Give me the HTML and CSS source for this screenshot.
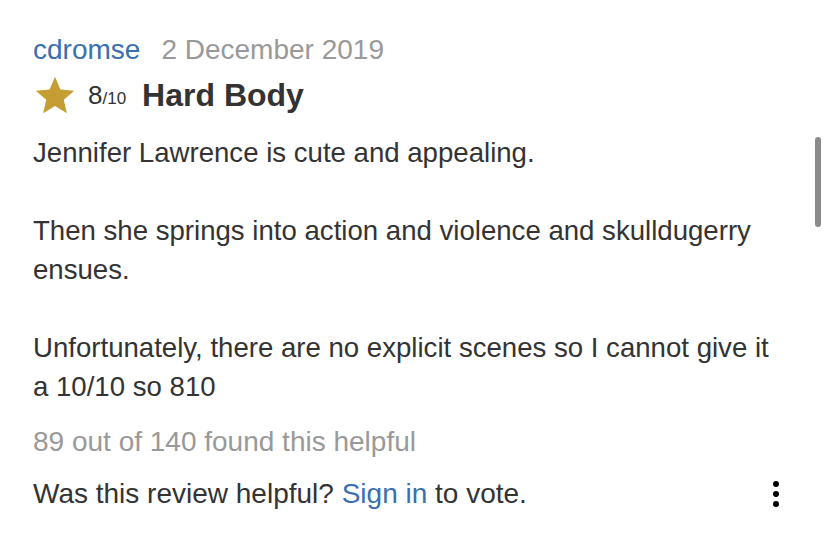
FILE: index.html
```html
<!DOCTYPE html>
<html lang="en">
<head>
<meta name="viewport" content="width=device-width, initial-scale=1.0">
<link rel="stylesheet" href="styles.css">
<title>User review</title>
</head>
<body>
  <div class="review">
    <div class="review-meta">
      <a class="author" href="#">cdromse</a>
      <span class="date">2 December 2019</span>
    </div>
    <div class="review-head">
      <svg class="star" viewBox="0 0 24 24" width="42" height="42">
        <path d="M12 1.6l3.1 7.3 7.9.6-6 5.2 1.8 7.7L12 18.3l-6.8 4.1 1.8-7.7-6-5.2 7.9-.6z" fill="#c59d32"/>
      </svg>
      <span class="rating">8<span class="scale">/10</span></span>
      <span class="title">Hard Body</span>
    </div>
    <div class="review-body">
      Jennifer Lawrence is cute and appealing.<br><br>
      Then she springs into action and violence and skulldugerry ensues.<br><br>
      Unfortunately, there are no explicit scenes so I cannot give it a 10/10 so 810
    </div>
    <div class="helpful-count">89 out of 140 found this helpful</div>
    <div class="review-foot">
      <span>Was this review helpful? <a href="#">Sign in</a> to vote.</span>
      <span class="kebab"><i></i><i></i><i></i></span>
    </div>
  </div>
  <div class="scrollbar"></div>
</body>
</html>
```

FILE: styles.css
```css
body {
  font-family: "Liberation Sans", Arial, sans-serif;
  margin: 0;
  padding: 0;
  background: #fff;
  color: #333;
}
a {
  color: #3a70b0;
  text-decoration: none;
}
.review {
  padding: 34px 42px 0 33px;
  font-size: 28px;
}
.review-meta {
  display: flex;
  gap: 21px;
  line-height: 32px;
}
.date {
  color: #999;
}
.review-head {
  display: flex;
  align-items: center;
  height: 44px;
  margin-top: 7px;
}
.star {
  margin-left: 1px;
  margin-right: 12px;
}
.rating {
  font-size: 26px;
  color: #333;
  margin-right: 16px;
}
.scale {
  font-size: 17px;
}
.title {
  font-size: 32px;
  font-weight: bold;
  color: #333;
}
.review-body {
  font-size: 27.6px;
  margin-top: 16px;
  line-height: 39px;
}
.helpful-count {
  color: #999;
  margin-top: 20px;
  line-height: 32px;
}
.review-foot {
  display: flex;
  justify-content: space-between;
  align-items: center;
  margin-top: 20px;
  line-height: 32px;
}
.kebab {
  display: flex;
  flex-direction: column;
  gap: 4px;
  margin-right: 6px;
}
.kebab i {
  display: block;
  width: 6px;
  height: 6px;
  border-radius: 50%;
  background: #000;
}
.scrollbar {
  position: absolute;
  left: 815px;
  top: 137px;
  width: 6px;
  height: 90px;
  border-radius: 3px;
  background: #8a8a8a;
}
```
